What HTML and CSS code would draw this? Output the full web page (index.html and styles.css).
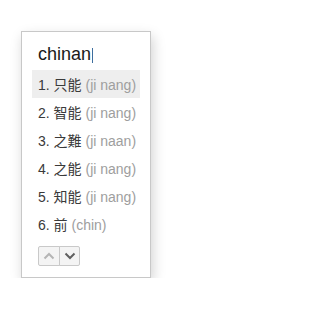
FILE: index.html
```html
<!DOCTYPE html>
<html>
<head>
<meta charset="utf-8">
<link rel="stylesheet" href="styles.css">
</head>
<body>
<div class="page">
  <div class="ime">
    <div class="input"><span class="typed">chinan</span><span class="caret"></span></div>
    <ul class="cands">
      <li class="cand active"><span class="word">1. 只能</span> <span class="py">(ji nang)</span></li>
      <li class="cand"><span class="word">2. 智能</span> <span class="py">(ji nang)</span></li>
      <li class="cand"><span class="word">3. 之難</span> <span class="py">(ji naan)</span></li>
      <li class="cand"><span class="word">4. 之能</span> <span class="py">(ji nang)</span></li>
      <li class="cand"><span class="word">5. 知能</span> <span class="py">(ji nang)</span></li>
      <li class="cand"><span class="word">6. 前</span> <span class="py">(chin)</span></li>
    </ul>
    <div class="pager">
      <button class="pbtn up" aria-label="Previous"><svg width="12" height="8" viewBox="0 0 12 8"><path d="M1.5 6.5 L6 2 L10.5 6.5" fill="none" stroke="#b5b5b5" stroke-width="2"/></svg></button>
      <button class="pbtn down" aria-label="Next"><svg width="12" height="8" viewBox="0 0 12 8"><path d="M1.5 1.5 L6 6 L10.5 1.5" fill="none" stroke="#606060" stroke-width="2"/></svg></button>
    </div>
  </div>
</div>
</body>
</html>
```
FILE: styles.css
```css
html, body {
  margin: 0;
  padding: 0;
  background: #fff;
}
.page {
  padding: 31px 0 0 21px;
  font-family: "Liberation Sans", "Noto Sans CJK SC", sans-serif;
}
.ime {
  width: 118px;
  border: 1px solid #c8c8c8;
  background: #fff;
  box-shadow: 2px 5px 12px rgba(0, 0, 0, 0.18);
  padding: 11px 10px 11px 0;
}
.input {
  display: flex;
  align-items: center;
  padding-left: 16px;
  font-size: 18px;
  line-height: 22px;
  height: 22px;
  color: #1a1a1a;
}
.caret {
  display: inline-block;
  width: 1px;
  height: 15px;
  background: #3d6e9e;
  margin-left: 1px;
  margin-top: 2px;
}
.cands {
  list-style: none;
  margin: 5px 0 0 10px;
  padding: 0;
}
.cand {
  height: 28px;
  line-height: 28px;
  padding: 1px 0 0 6px;
  box-sizing: border-box;
  font-size: 14px;
  color: #3a3a3a;
  white-space: nowrap;
}
.cand.active {
  background: #eeeeee;
}
.py {
  color: #9e9e9e;
}
.pager {
  display: flex;
  margin: 8px 0 0 16px;
}
.pbtn {
  width: 22px;
  height: 20px;
  padding: 0;
  margin: 0;
  border: 1px solid #c9c9c9;
  background: #f4f4f4;
  display: flex;
  align-items: center;
  justify-content: center;
  box-sizing: border-box;
}
.pbtn.up {
  border-radius: 2px 0 0 2px;
}
.pbtn.down {
  border-radius: 0 2px 2px 0;
  margin-left: -1px;
  width: 21px;
}
```
